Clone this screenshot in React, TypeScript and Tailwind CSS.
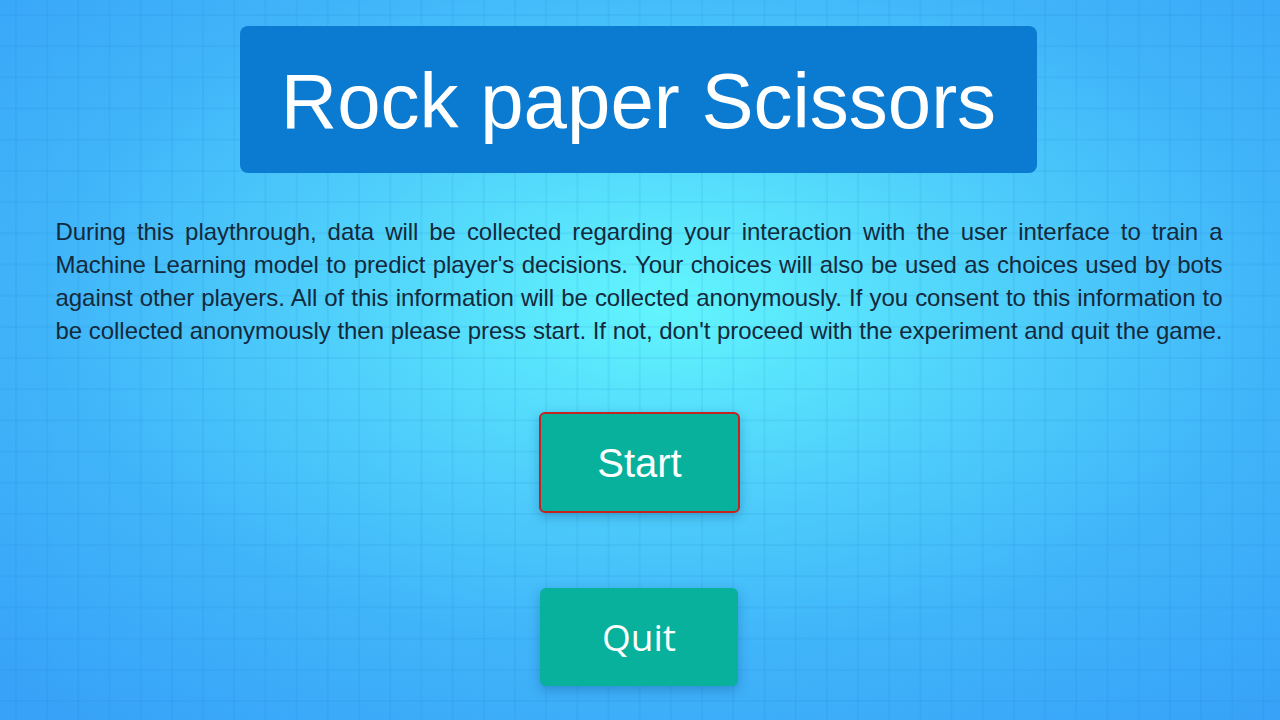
import React from "react";

const lines = [
  "During this playthrough, data will be collected regarding your interaction with the user interface to train a",
  "Machine Learning model to predict player's decisions. Your choices will also be used as choices used by bots",
  "against other players. All of this information will be collected anonymously. If you consent to this information to",
  "be collected anonymously then please press start. If not, don't proceed with the experiment and quit the game.",
];

// Welcome / consent screen for the Rock paper Scissors game.
export default function App() {
  return (
    <div
      className="w-[1280px] h-[720px] overflow-hidden flex flex-col items-center font-['Liberation_Sans',Arial,sans-serif] bg-[linear-gradient(rgba(20,110,200,0.09)_2px,transparent_2px),linear-gradient(90deg,rgba(20,110,200,0.09)_2px,transparent_2px),radial-gradient(ellipse_75%_75%_at_52%_42%,#62f6fd_0%,#4fd0fb_35%,#40b4f9_65%,#37a2f8_100%)] bg-[size:31.2px_31.2px,31.2px_31.2px,100%_100%] bg-[position:15px_14px,15px_14px,0_0]"
    >
      <div className="mt-[26px] mr-[3px] w-[797px] h-[147px] rounded-lg bg-[#0a7bd0] flex items-center justify-center">
        <h1 className="text-white text-[78px] leading-none pt-[2px]">Rock paper Scissors</h1>
      </div>

      <div className="mt-[42px] w-[1167px] mr-[2px] text-[24px] leading-[33px] tracking-[-0.05px] text-[#142a3c]">
        {lines.map((l) => (
          <div key={l} className="text-justify [text-align-last:justify] whitespace-nowrap">
            {l}
          </div>
        ))}
      </div>

      <button className="mt-[65px] mr-[1px] w-[201px] h-[101px] rounded-md bg-[#08b19b] border-2 border-[#c4231f] text-white text-[40px] shadow-[0_4px_12px_rgba(0,60,120,0.3)] flex items-center justify-center">
        Start
      </button>

      <button className="mt-[75px] mr-[2px] w-[198px] h-[98px] rounded-md bg-[#08b19b] text-white text-[37px] font-['Open_Sans',sans-serif] shadow-[0_4px_12px_rgba(0,60,120,0.3)] flex items-center justify-center">
        Quit
      </button>
    </div>
  );
}
